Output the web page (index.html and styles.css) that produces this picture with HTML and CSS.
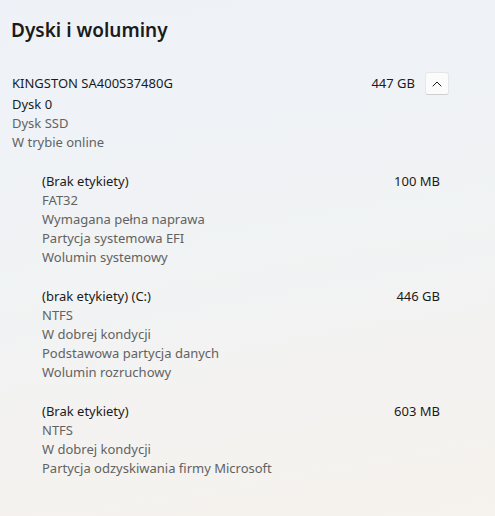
FILE: index.html
```html
<!DOCTYPE html>
<html lang="pl">
<head>
<meta charset="utf-8">
<link rel="stylesheet" href="styles.css">
</head>
<body>
<main class="page">
  <h1 class="title">Dyski i woluminy</h1>
  <section class="disk">
    <div class="disk-head">
      <div class="disk-name">KINGSTON SA400S37480G</div>
      <div class="disk-size">447 GB</div>
      <button class="toggle" aria-label="Zwiń">
        <svg width="10" height="6" viewBox="0 0 10 6"><path d="M0.7 5.3 L5 1 L9.3 5.3" fill="none" stroke="#1b1b1b" stroke-width="1"/></svg>
      </button>
    </div>
    <div class="line primary gap">Dysk 0</div>
    <div class="line secondary">Dysk SSD</div>
    <div class="line secondary">W trybie online</div>
  </section>
  <section class="volumes">
    <div class="volume">
      <div class="vol-head"><span class="primary">(Brak etykiety)</span><span class="primary">100 MB</span></div>
      <div class="line secondary">FAT32</div>
      <div class="line secondary">Wymagana pełna naprawa</div>
      <div class="line secondary">Partycja systemowa EFI</div>
      <div class="line secondary">Wolumin systemowy</div>
    </div>
    <div class="volume">
      <div class="vol-head"><span class="primary">(brak etykiety) (C:)</span><span class="primary">446 GB</span></div>
      <div class="line secondary">NTFS</div>
      <div class="line secondary">W dobrej kondycji</div>
      <div class="line secondary">Podstawowa partycja danych</div>
      <div class="line secondary">Wolumin rozruchowy</div>
    </div>
    <div class="volume">
      <div class="vol-head"><span class="primary">(Brak etykiety)</span><span class="primary">603 MB</span></div>
      <div class="line secondary">NTFS</div>
      <div class="line secondary">W dobrej kondycji</div>
      <div class="line secondary">Partycja odzyskiwania firmy Microsoft</div>
    </div>
  </section>
</main>
</body>
</html>
```

FILE: styles.css
```css
html, body {
  margin: 0;
  height: 100%;
}
body {
  background: linear-gradient(170deg, #eef2f8 0%, #f1f3f4 50%, #f6f2ed 100%);
  font-family: "Noto Sans", "Open Sans", sans-serif;
  font-size: 13px;
  color: #1b1b1b;
}
.page {
  padding: 16px 0 0 0;
  width: 495px;
  height: 516px;
  box-sizing: border-box;
}
.title {
  margin: 0 0 0 11px;
  font-size: 19px;
  font-weight: 600;
  line-height: 28px;
  color: #1a1a1a;
}
.disk {
  margin-top: 28px;
  padding-left: 12px;
}
.disk-head {
  display: flex;
  align-items: center;
  height: 22px;
}
.disk-name {
  flex: 1;
  line-height: 19px;
}
.disk-size {
  line-height: 19px;
}
.toggle {
  margin: 1px 46px 0 10px;
  width: 24px;
  height: 23px;
  padding: 0;
  display: flex;
  align-items: center;
  justify-content: center;
  background: #fbfbfb;
  border: 1px solid #e6e6e6;
  border-bottom-color: #cfcfcf;
  border-radius: 3px;
}
.line {
  line-height: 19px;
}
.gap {
  margin-top: 1px;
}
.primary {
  color: #1b1b1b;
}
.secondary {
  color: #626262;
}
.volumes {
  margin-top: 20px;
  padding: 0 55px 0 42px;
  display: flex;
  flex-direction: column;
  gap: 20px;
}
.vol-head {
  display: flex;
  justify-content: space-between;
  line-height: 19px;
}
```
